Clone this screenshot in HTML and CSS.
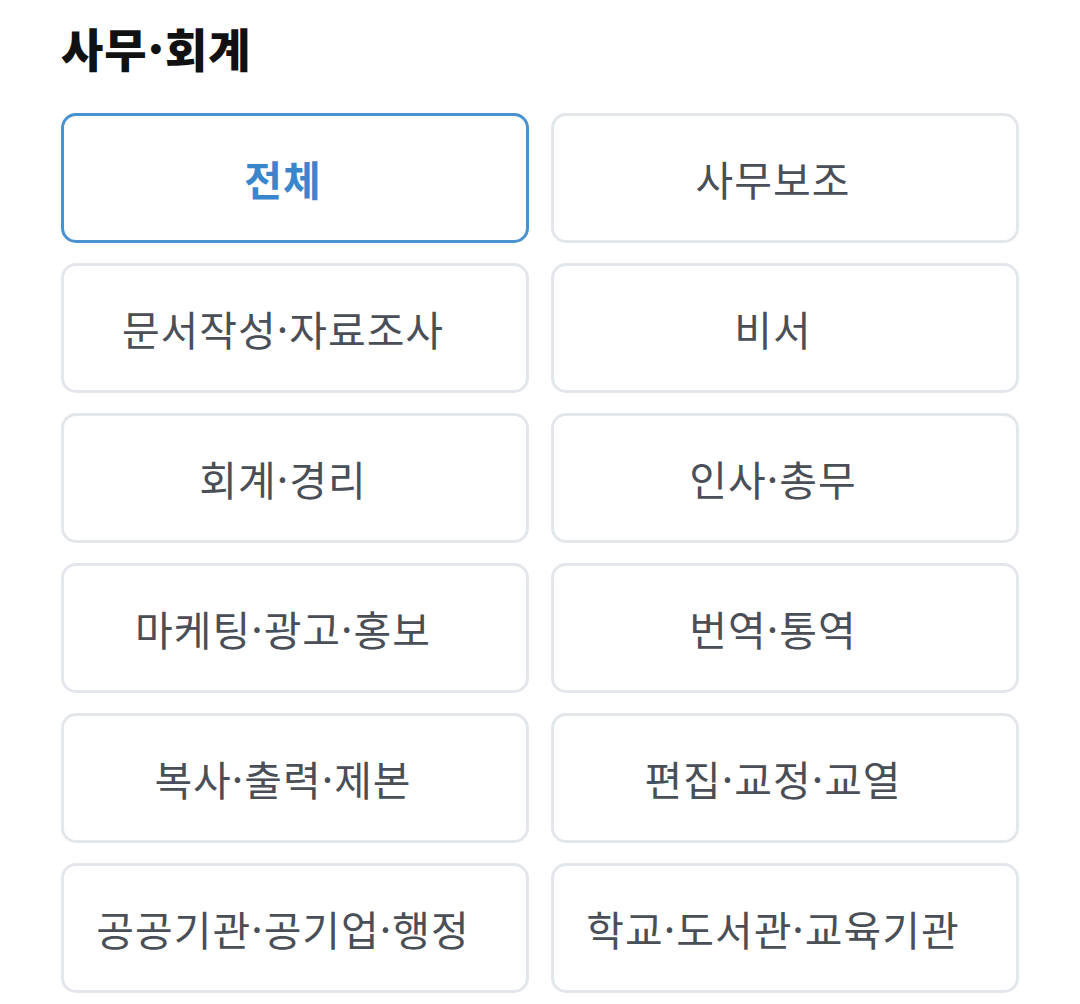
FILE: index.html
```html
<!DOCTYPE html>
<html lang="ko">
<head>
<meta charset="utf-8">
<link rel="stylesheet" href="styles.css">
</head>
<body>
<div class="page">
  <h1 class="title">사무·회계</h1>
  <div class="grid">
    <div class="chip active">전체</div>
    <div class="chip">사무보조</div>
    <div class="chip">문서작성·자료조사</div>
    <div class="chip">비서</div>
    <div class="chip">회계·경리</div>
    <div class="chip">인사·총무</div>
    <div class="chip">마케팅·광고·홍보</div>
    <div class="chip">번역·통역</div>
    <div class="chip">복사·출력·제본</div>
    <div class="chip">편집·교정·교열</div>
    <div class="chip">공공기관·공기업·행정</div>
    <div class="chip">학교·도서관·교육기관</div>
  </div>
</div>
</body>
</html>
```

FILE: styles.css
```css
html, body {
  margin: 0;
  padding: 0;
  background: #ffffff;
}
.page {
  padding: 16px 61px 0 61px;
  font-family: "Noto Sans CJK KR", "Noto Sans", sans-serif;
}
.title {
  margin: 0;
  font-size: 46px;
  font-weight: 900;
  color: #111111;
  line-height: 62px;
  letter-spacing: 1px;
}
.grid {
  margin-top: 35px;
  display: grid;
  grid-template-columns: 1fr 1fr;
  column-gap: 22px;
  row-gap: 20px;
}
.chip {
  box-sizing: border-box;
  height: 130px;
  padding-right: 24px;
  border: 3px solid #e3e7eb;
  border-radius: 15px;
  display: flex;
  align-items: center;
  justify-content: center;
  font-size: 41px;
  letter-spacing: 1px;
  color: #4a4f57;
  font-weight: 400;
}
.chip.active {
  border-color: #4a92cf;
  color: #3a86cc;
  font-weight: 700;
}
```
